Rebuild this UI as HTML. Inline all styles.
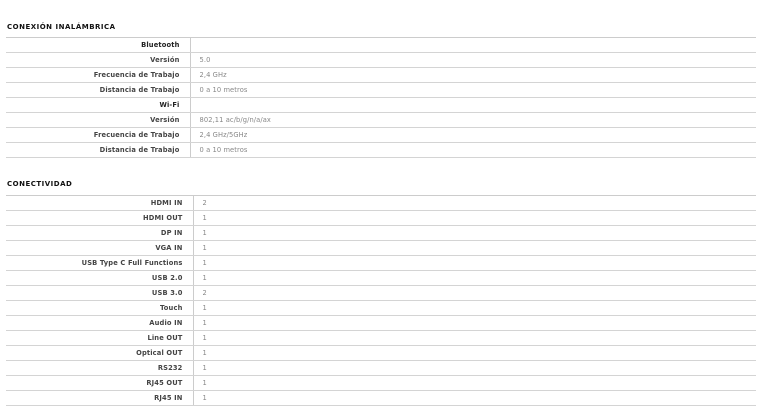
<!DOCTYPE html>
<html><head><meta charset="utf-8"><style>
body{margin:0;background:#fff;width:773px;height:418px;overflow:hidden;font-family:"DejaVu Sans",sans-serif;position:relative}
h2{position:absolute;left:7px;margin:0;font-size:7px;font-weight:bold;color:#111;letter-spacing:0.5px}
table{position:absolute;left:6px;width:750px;border-collapse:collapse;border-top:1px solid #ccc}
td{height:14px;padding:0;border-bottom:1px solid #d4d4d4;font-size:6.7px;line-height:14px;white-space:nowrap}
td.l{text-align:right;font-weight:bold;color:#444;padding-right:10px;border-right:1px solid #ccc;letter-spacing:0.15px}
td.v{color:#888;padding-left:9px;letter-spacing:0.1px}
</style></head><body>
<h2 style="top:23px">CONEXIÓN INALÁMBRICA</h2>
<table style="top:37px"><colgroup><col style="width:184px"><col></colgroup>
<tr><td class="l" style="color:#222">Bluetooth</td><td class="v"></td></tr>
<tr><td class="l">Versión</td><td class="v">5.0</td></tr>
<tr><td class="l">Frecuencia de Trabajo</td><td class="v">2,4 GHz</td></tr>
<tr><td class="l">Distancia de Trabajo</td><td class="v">0 a 10 metros</td></tr>
<tr><td class="l" style="color:#222">Wi-Fi</td><td class="v"></td></tr>
<tr><td class="l">Versión</td><td class="v">802,11 ac/b/g/n/a/ax</td></tr>
<tr><td class="l">Frecuencia de Trabajo</td><td class="v">2,4 GHz/5GHz</td></tr>
<tr><td class="l">Distancia de Trabajo</td><td class="v">0 a 10 metros</td></tr>
</table>
<h2 style="top:180px">CONECTIVIDAD</h2>
<table style="top:195px"><colgroup><col style="width:187px"><col></colgroup>
<tr><td class="l">HDMI IN</td><td class="v">2</td></tr>
<tr><td class="l">HDMI OUT</td><td class="v">1</td></tr>
<tr><td class="l">DP IN</td><td class="v">1</td></tr>
<tr><td class="l">VGA IN</td><td class="v">1</td></tr>
<tr><td class="l">USB Type C Full Functions</td><td class="v">1</td></tr>
<tr><td class="l">USB 2.0</td><td class="v">1</td></tr>
<tr><td class="l">USB 3.0</td><td class="v">2</td></tr>
<tr><td class="l">Touch</td><td class="v">1</td></tr>
<tr><td class="l">Audio IN</td><td class="v">1</td></tr>
<tr><td class="l">Line OUT</td><td class="v">1</td></tr>
<tr><td class="l">Optical OUT</td><td class="v">1</td></tr>
<tr><td class="l">RS232</td><td class="v">1</td></tr>
<tr><td class="l">RJ45 OUT</td><td class="v">1</td></tr>
<tr><td class="l">RJ45 IN</td><td class="v">1</td></tr>
</table>
</body></html>
